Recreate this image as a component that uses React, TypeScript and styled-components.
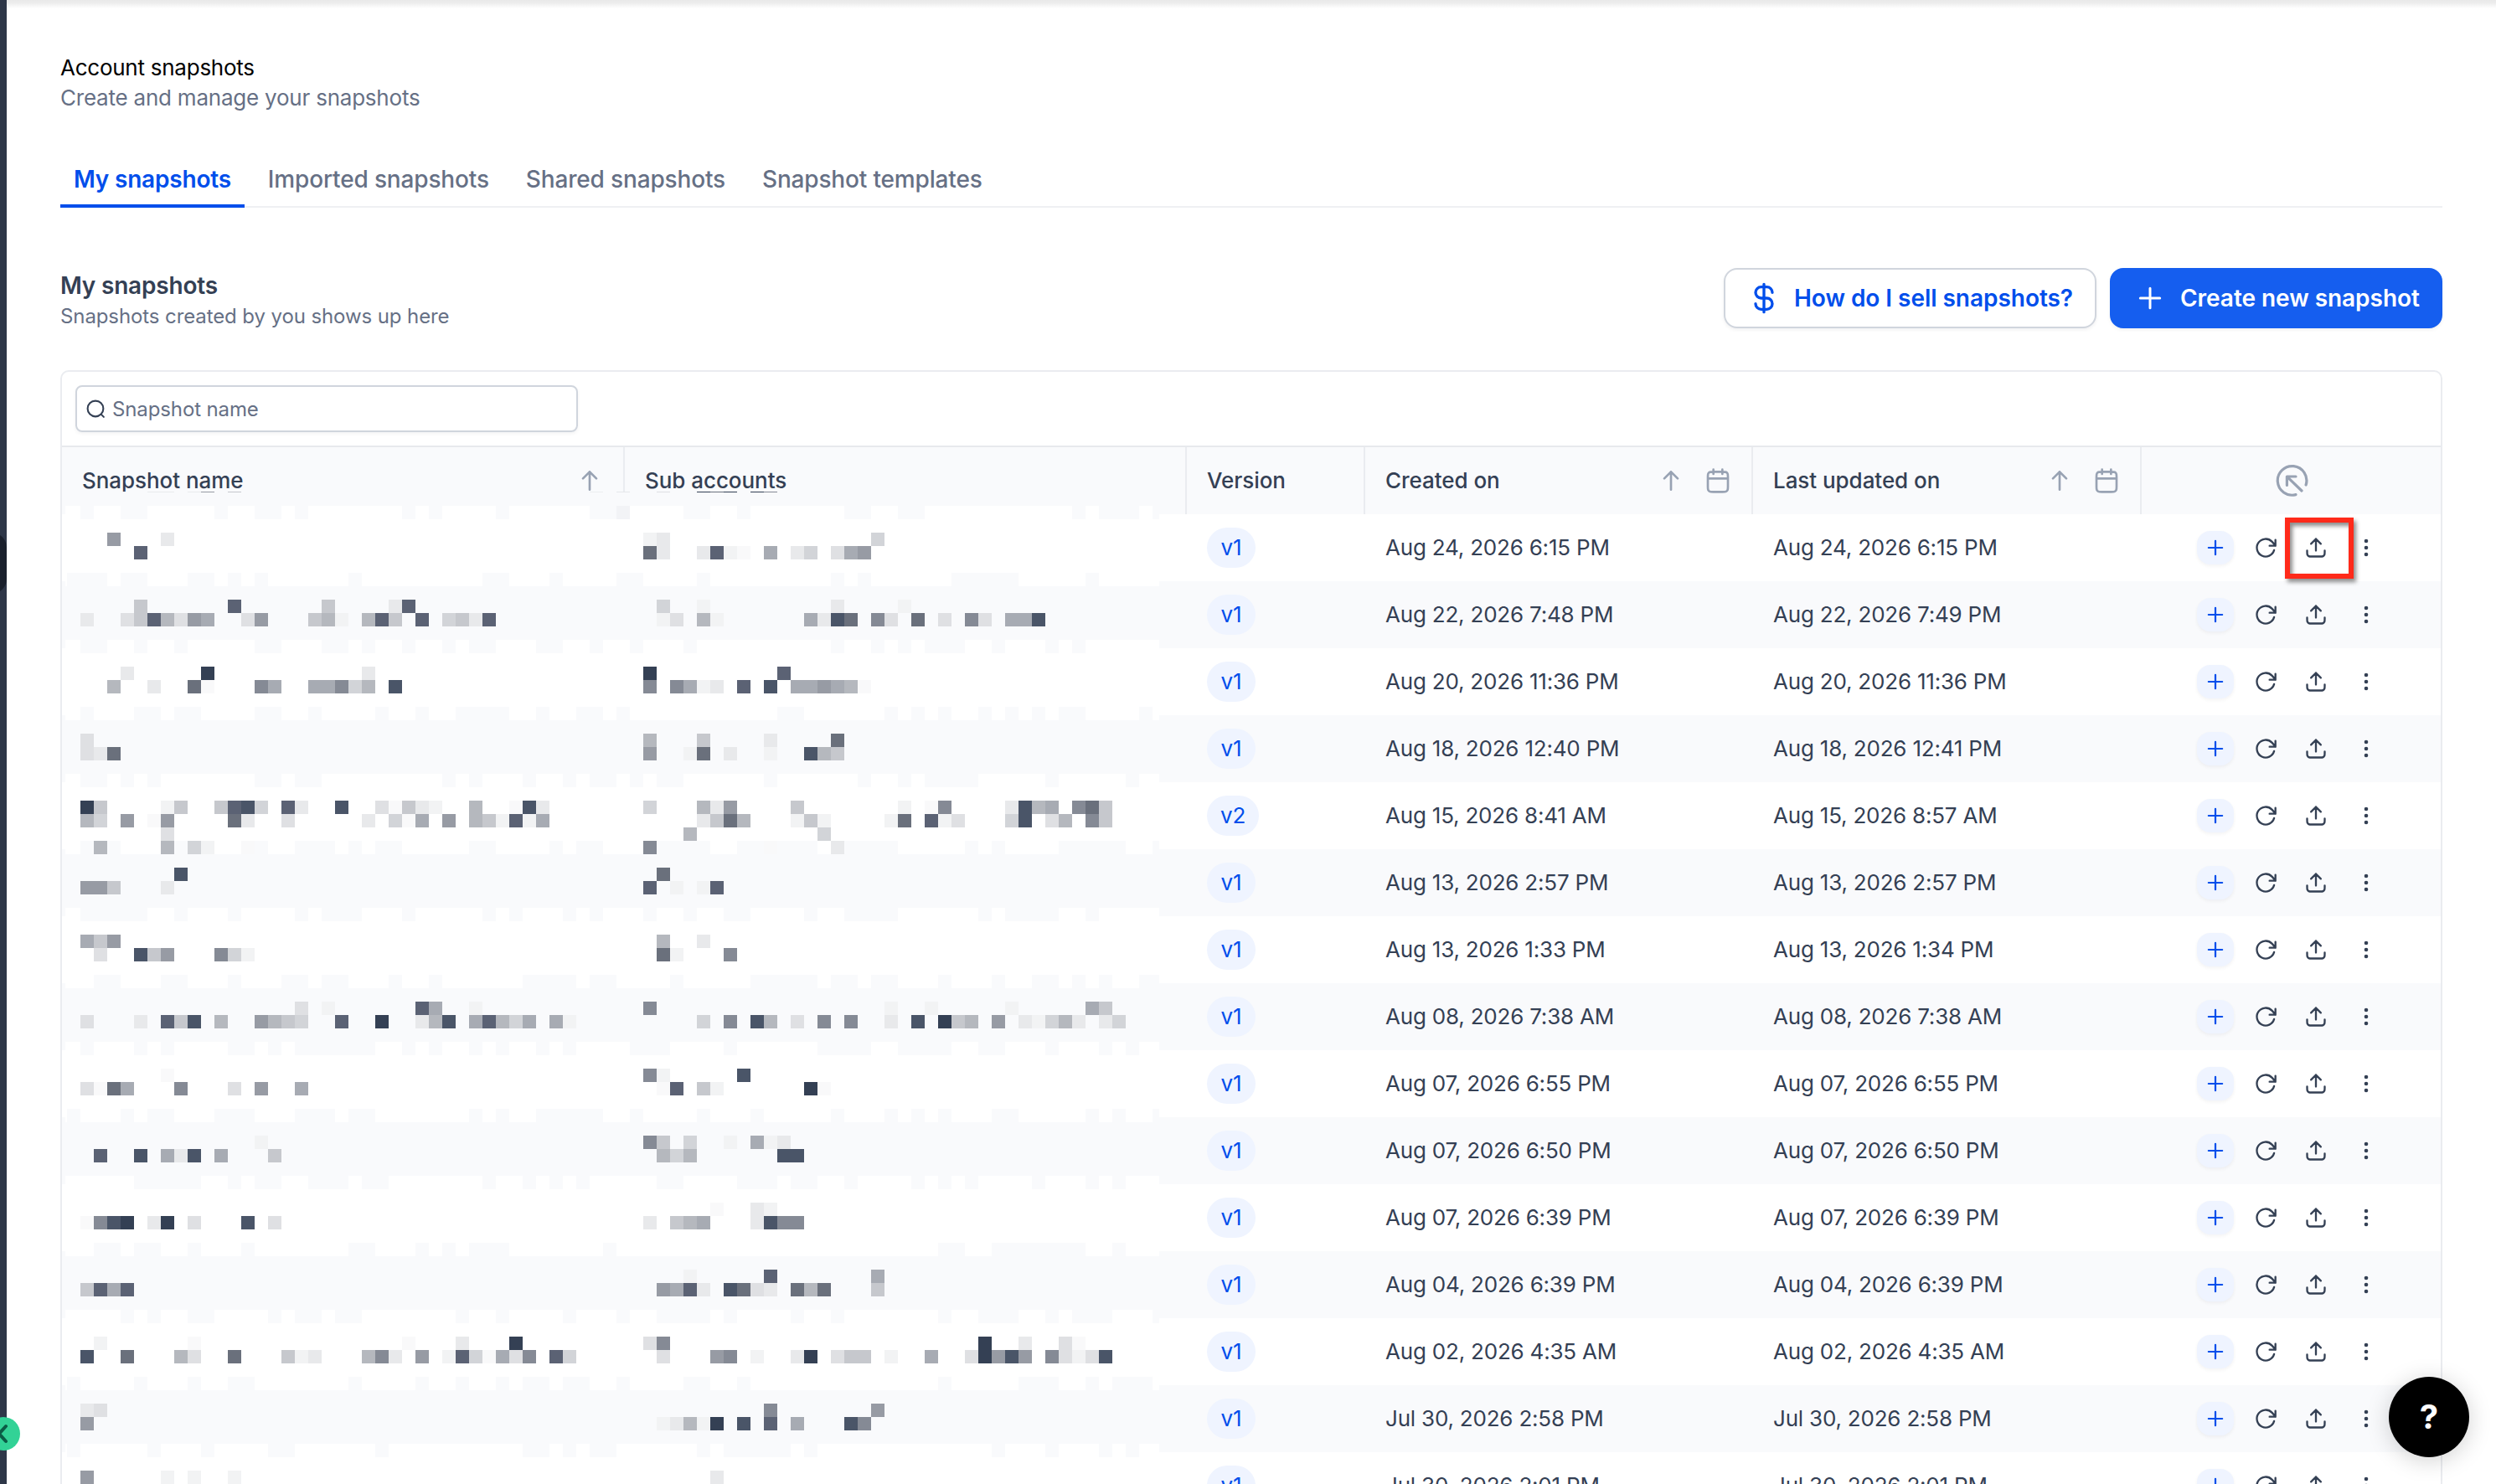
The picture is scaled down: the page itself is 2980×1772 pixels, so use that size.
import React from 'react';
import styled, { createGlobalStyle, css } from 'styled-components';

const Global = createGlobalStyle`
  html, body { margin: 0; padding: 0; background: #fff; }
  *, *::before, *::after { box-sizing: border-box; }
  body { font-family: Inter, "Liberation Sans", sans-serif; -webkit-font-smoothing: antialiased; }
`;

const ROW_H = 80;
const COLUMNS = '672px 671px 213px 463px 464px 1fr';

const Page = styled.div`
  position: relative;
  display: flex;
  width: 2980px;
  height: 1772px;
  overflow: hidden;
  background: #fff;
`;

const Rail = styled.aside`
  position: relative;
  flex: 0 0 8px;
  background: #2e3748;
  overflow: hidden;
`;

const RailHandle = styled.span`
  position: absolute;
  top: 636px;
  right: 0;
  width: 40px;
  height: 73px;
  border-radius: 18px;
  background: #1a202c;
`;

const CollapseButton = styled.button`
  position: absolute;
  left: -16px;
  top: 1692px;
  width: 40px;
  height: 40px;
  padding: 0;
  border: 0;
  border-radius: 50%;
  background: #32d296;
  color: #0b5c46;
  display: grid;
  place-items: center;
`;

const TopShadow = styled.div`
  position: absolute;
  left: 8px;
  right: 0;
  top: 0;
  height: 10px;
  background: linear-gradient(#e9e9e9 0, #ededed 35%, #fff 100%);
`;

const Main = styled.main`
  flex: 1;
  padding: 64px 64px 0;
  min-width: 0;
`;

const PageHead = styled.header`
  display: flex;
  flex-direction: column;
`;

const PageTitle = styled.h1`
  margin: 0;
  font-size: 26px;
  line-height: 34px;
  font-weight: 400;
  letter-spacing: -0.25px;
  color: #000;
`;

const PageLead = styled.p`
  margin: 2px 0 0;
  font-size: 26px;
  line-height: 34px;
  letter-spacing: -0.22px;
  color: #667085;
`;

const Tabs = styled.nav`
  display: flex;
  gap: 12px;
  height: 64px;
  margin-top: 50px;
  box-shadow: inset 0 -2px 0 #eff0f3;
`;

const Tab = styled.a<{ $active?: boolean }>`
  padding: 13px 16px 0;
  height: 64px;
  font-size: 28px;
  line-height: 34px;
  font-weight: 500;
  letter-spacing: -0.16px;
  white-space: nowrap;
  color: #667085;
  ${p => p.$active && css`
    color: #004eeb;
    font-weight: 600;
    letter-spacing: -0.2px;
    border-bottom: 4px solid #004eeb;
  `}
`;

const SectionHead = styled.section`
  display: flex;
  justify-content: space-between;
  align-items: flex-start;
  padding-top: 72px;
  height: 194px;
`;

const SectionTitle = styled.h2`
  margin: 4px 0 0;
  font-size: 28px;
  line-height: 34px;
  font-weight: 600;
  letter-spacing: -0.2px;
  color: #344054;
`;

const SectionLead = styled.p`
  margin: 5px 0 0;
  font-size: 24px;
  line-height: 30px;
  letter-spacing: -0.1px;
  color: #667085;
`;

const Actions = styled.div`
  display: flex;
  gap: 16px;
`;

const Button = styled.button<{ $primary?: boolean }>`
  display: flex;
  align-items: center;
  gap: 16px;
  width: ${p => (p.$primary ? 397 : 445)}px;
  height: 72px;
  padding: 0 0 0 26px;
  border: 2px solid ${p => (p.$primary ? '#155eef' : '#d0d5dd')};
  border-radius: 16px;
  background: ${p => (p.$primary ? '#155eef' : '#fff')};
  color: ${p => (p.$primary ? '#fff' : '#004eeb')};
  box-shadow: 0 2px 4px rgba(16, 24, 40, 0.06);
  font: 600 28px/40px Inter, "Liberation Sans", sans-serif;
  letter-spacing: -0.04px;
  white-space: nowrap;
`;

const Card = styled.section`
  position: relative;
  height: 1500px;
  border: 2px solid #eaecf0;
  border-radius: 10px 10px 0 0;
`;

const Toolbar = styled.div`
  height: 90px;
  padding: 16px;
  border-bottom: 2px solid #e7e9ed;
`;

const SearchField = styled.label`
  display: flex;
  align-items: center;
  gap: 7px;
  width: 600px;
  height: 56px;
  padding-left: 10px;
  border: 2px solid #d0d5dd;
  border-radius: 8px;
  box-shadow: 0 2px 4px rgba(16, 24, 40, 0.05);
  font-size: 24px;
  letter-spacing: -0.12px;
  color: #667085;

  svg { color: #344054; }
`;

const HeadRow = styled.div`
  display: grid;
  grid-template-columns: ${COLUMNS};
  height: ${ROW_H}px;
  background: #f9fafc;
`;

const HeadCell = styled.div<{ $last?: boolean }>`
  display: flex;
  align-items: center;
  justify-content: ${p => (p.$last ? 'center' : 'flex-start')};
  padding: 0 ${p => (p.$last ? 0 : 24)}px 1px;
  border-right: ${p => (p.$last ? 0 : 2)}px solid #eaecf0;
  font-size: 26px;
  font-weight: 500;
  letter-spacing: -0.05px;
  color: ${p => (p.$last ? '#98a2b3' : '#344054')};
  white-space: nowrap;
`;

const HeadIcons = styled.span`
  display: flex;
  align-items: center;
  gap: 24px;
  margin-left: auto;
  color: #98a2b3;
`;

const Row = styled.div<{ $alt: boolean }>`
  display: grid;
  grid-template-columns: ${COLUMNS};
  align-items: center;
  height: ${ROW_H}px;
  background: ${p => (p.$alt ? '#f9fafc' : '#fff')};
`;

const Cell = styled.div`
  padding-left: 24px;
  font-size: 26px;
  line-height: 36px;
  letter-spacing: -0.2px;
  color: #344054;
  white-space: nowrap;
`;

const Badge = styled.span`
  display: inline-flex;
  align-items: center;
  justify-content: center;
  height: 48px;
  min-width: 58px;
  padding: 0 16px;
  border-radius: 24px;
  background: #eff4ff;
  color: #004eeb;
`;

const RowActions = styled.div`
  display: flex;
  align-items: center;
  padding-left: 66px;
  color: #344054;
`;

const AddButton = styled.button`
  width: 44px;
  height: 40px;
  margin-right: 8px;
  padding: 0;
  border: 0;
  border-radius: 16px;
  display: grid;
  place-items: center;
  background: #eff4ff;
  color: #004eeb;
  box-shadow: 0 2px 4px rgba(16, 24, 40, 0.05);
`;

const IconButton = styled.span`
  width: 60px;
  display: grid;
  place-items: center;
`;

const Mosaic = styled.svg`
  position: absolute;
  left: 4px;
  top: 142px;
  pointer-events: none;
`;

const Highlight = styled.div`
  position: absolute;
  left: 2728px;
  top: 618px;
  width: 82px;
  height: 73px;
  border: 6px solid #ff2a1a;
  box-shadow: 3px 4px 5px rgba(0, 0, 0, 0.45), inset 3px 4px 5px rgba(0, 0, 0, 0.45);
`;

const HelpButton = styled.button`
  position: absolute;
  left: 2852px;
  top: 1644px;
  width: 96px;
  height: 96px;
  padding: 0;
  border: 0;
  border-radius: 50%;
  background: #000;
  color: #fff;
  font: 700 40px/96px Inter, "Liberation Sans", sans-serif;
  text-align: center;
  box-shadow: 0 4px 28px rgba(0, 0, 0, 0.18);
`;

type IconProps = { d: string; size?: number; stroke?: number; box?: number };

const Icon = ({ d, size = 28, stroke = 2, box = 24 }: IconProps) => (
  <svg width={size} height={size} viewBox={`0 0 ${box} ${box}`} fill="none" stroke="currentColor"
    strokeWidth={stroke} strokeLinecap="round" strokeLinejoin="round">
    <path d={d} />
  </svg>
);

const PATHS = {
  dollar: 'M6 16a4 4 0 0 0 4 4h4a4 4 0 0 0 0-8h-4a4 4 0 0 1 0-8h4a4 4 0 0 1 4 4M12 2v20',
  plus: 'M12 5v14M5 12h14',
  search: 'M18.6 18.6L21 21M20.5 11.5a9 9 0 1 1-18 0a9 9 0 0 1 18 0z',
  arrowUp: 'M12 20V4m0 0l-6 6m6-6l6 6',
  calendar: 'M21 10H3m13-8v4M8 2v4M7.8 22h8.4c1.68 0 2.52 0 3.162-.327a3 3 0 0 0 1.311-1.311C21 19.72 21 18.88 21 17.2V8.8c0-1.68 0-2.52-.327-3.162a3 3 0 0 0-1.311-1.311C18.72 4 17.88 4 16.2 4H7.8c-1.68 0-2.52 0-3.162.327a3 3 0 0 0-1.311 1.311C3 6.28 3 7.12 3 8.8v8.4c0 1.68 0 2.52.327 3.162a3 3 0 0 0 1.311 1.311C5.28 22 6.12 22 7.8 22z',
  action: 'M37.1 25A17.3 17.3 0 1 0 25 36.6M25 15H14.4V25.4M15 15.6L32 32',
  refresh: 'M22 10s-2.005-2.732-3.634-4.362A9 9 0 1 0 20.648 14.5M22 10V4m0 6h-6',
  upload: 'M21 15v1.2c0 1.68 0 2.52-.327 3.162a3 3 0 0 1-1.311 1.311C18.72 21 17.88 21 16.2 21H7.8c-1.68 0-2.52 0-3.162-.327a3 3 0 0 1-1.311-1.311C3 18.72 3 17.88 3 16.2V15m14-7l-5-5m0 0L7 8m5-5v12',
};

const DotsIcon = () => (
  <svg width="28" height="28" viewBox="0 0 28 28" fill="currentColor">
    <circle cx="14" cy="6" r="2.3" />
    <circle cx="14" cy="14" r="2.3" />
    <circle cx="14" cy="22" r="2.3" />
  </svg>
);

const SNAPSHOTS: [string, string, string][] = [
  ['v1', 'Aug 24, 2026 6:15 PM', 'Aug 24, 2026 6:15 PM'],
  ['v1', 'Aug 22, 2026 7:48 PM', 'Aug 22, 2026 7:49 PM'],
  ['v1', 'Aug 20, 2026 11:36 PM', 'Aug 20, 2026 11:36 PM'],
  ['v1', 'Aug 18, 2026 12:40 PM', 'Aug 18, 2026 12:41 PM'],
  ['v2', 'Aug 15, 2026 8:41 AM', 'Aug 15, 2026 8:57 AM'],
  ['v1', 'Aug 13, 2026 2:57 PM', 'Aug 13, 2026 2:57 PM'],
  ['v1', 'Aug 13, 2026 1:33 PM', 'Aug 13, 2026 1:34 PM'],
  ['v1', 'Aug 08, 2026 7:38 AM', 'Aug 08, 2026 7:38 AM'],
  ['v1', 'Aug 07, 2026 6:55 PM', 'Aug 07, 2026 6:55 PM'],
  ['v1', 'Aug 07, 2026 6:50 PM', 'Aug 07, 2026 6:50 PM'],
  ['v1', 'Aug 07, 2026 6:39 PM', 'Aug 07, 2026 6:39 PM'],
  ['v1', 'Aug 04, 2026 6:39 PM', 'Aug 04, 2026 6:39 PM'],
  ['v1', 'Aug 02, 2026 4:35 AM', 'Aug 02, 2026 4:35 AM'],
  ['v1', 'Jul 30, 2026 2:58 PM', 'Jul 30, 2026 2:58 PM'],
  ['v1', 'Jul 30, 2026 2:01 PM', 'Jul 30, 2026 2:01 PM'],
];

/* Redacted names. Each entry is "column:shades", one hex digit per 16px block. */
const SHADES: Record<string, string> = {
  '0': '#344054', '1': '#4a5568', '2': '#5b6274', '3': '#6a707c', '4': '#858a95',
  '5': '#979ba4', '6': '#a7abb3', '7': '#b5b8be', '8': '#c6c8cd', '9': '#d2d4d8',
  a: '#dfe0e3', b: '#e8e9eb', c: '#f2f3f4', d: '#f9f9fa',
};

/* [block line within the row, name column, sub-account column] */
const REDACTED: [number, string, string][][] = [
  [[2, '2:5 6:b', '0:cb 17:9'], [3, '4:2', '0:3b 4:b2cd 9:6 11:b9 14:a65']],
  [[2, '4:8 11:2 18:8 23:b2', '1:9 4:c 14:b 19:c'], [3, '0:b 3:a827a56 12:a5 17:87c 21:728 25:2 27:98b2', '1:ca 4:7c 12:6b13 17:4a 20:3 22:a 24:4a 27:661']],
  [[2, '3:b 9:0 21:b', '0:0 10:2'], [3, '2:7 5:b 8:3d 13:46 17:66497 23:1', '0:4 2:46cb 7:2 9:1 11:66567d']],
  [[2, '0:a', '0:7 4:8 9:b 14:3'], [3, '0:ab3', '0:5 3:c3 6:b 9:c 12:178']],
  [[2, '0:08 6:c8 10:8219 15:2b 19:1 22:ad8bc 29:7 32:d1b', '0:9 4:7b5 11:8 19:c 21:d4 27:b176 32:438'],
    [3, '0:79 3:5 5:d5 11:3b 15:a 21:b 23:9d6 27:5 29:78c2c6', '4:b837 11:c8c 18:c3 21:2ca 27:91 30:a7 33:48'],
    [4, '6:a', '3:7 13:9'], [5, '1:7 6:7 8:9c 12:d', '0:4 9:d 14:b']],
  [[2, '7:1', '1:3'], [3, '0:558 6:b', '0:2 2:c 4:c2']],
  [[2, '0:685', '1:7 4:b'], [3, '1:a 4:185 10:49c', '1:3c 6:4']],
  [[2, '16:a 18:c 25:26 29:c', '0:4 18:c 21:c 27:c 33:68'], [3, '0:a 4:b 6:281 10:7 13:5789 19:2 22:0 25:b71 29:62796 35:6c', '4:9 6:4 8:17 11:a 13:4 15:4 18:b 20:1 22:087 26:5 28:bc97b 34:b9']],
  [[2, '6:d', '0:4c 7:1'], [3, '0:ad36 7:4 11:a 13:5 16:6', '1:d2 4:8c 12:0d']],
  [[2, '13:c', '0:48 3:9 6:c 8:6cb'], [3, '1:2 4:1 6:6b1 10:6 14:8', '1:797 10:11']],
  [[2, '', '5:d 8:bc'], [3, '0:d410 5:b0 8:a 12:1 14:a', '0:b 2:876 8:b144']],
  [[2, '', '3:c 9:2 17:6'], [3, '0:8262', '1:562b 6:13ab 11:373 17:8']],
  [[2, '1:c 8:d 24:d 28:b 32:0', '0:a4 25:0 28:b 31:ad'], [3, '0:1 3:3 7:7a 11:3 15:8cb 21:74b 25:5 27:c29d6a4 35:29', '1:a 5:54 8:c 11:b0 14:a88 18:c 21:6 24:a0515 30:4aca1']],
  [[2, '0:ba', '9:4 17:5'], [3, '0:5', '1:cb7c0 7:1 9:2 11:6 15:14']],
  [[2, '0:5 6:c 8:c 11:c', '5:b']],
];

/* Tinted runs in the ragged band where two striped rows meet: "column:length". */
const BANDS: [string, string][] = [
  ['0 3:2 10 13:2 16 24 26 31 38:2', '3:2 7 15:2 19:2 32 34:3 38'],
  ['-1:3 3:2 8:2 11 13 20 30:2 35', '-2:2 4 14 16 23:4 27 33'],
  ['0:2 4 7 13:2 18:2 21 24 27 29:2 34:2 38', '-4 -1 3 14 17 19 21:3 26 30 32'],
  ['0 4:2 7:2 13:2 17 22 25 28:4 34 37:2', '-4 -2 10:2 18 20 22 25 27 29 31:2 37'],
  ['0:2 3 5 13:2 16:2 27 29 33 36 38:2', '-4:2 -1 1:2 9 16 19 21:4 30 36'],
  ['0 2 7 13 16:3 20 22:2 29:2 35 37:2', '-4 1:4 7:6 15:4 24 26 31:5 38'],
  ['0:5 7 11 16 18:3 24 30 32 36 38', '-4 0 3 6:2 12 15:3 18 25 27:4 33'],
  ['1:2 6:2 11 15:2 18:2 23 26 33:4 38:2', '-4:2 2 8:5 14:2 17:2 22 26 29:2 32 34 37:2'],
  ['0 4 6 11:2 14 16:6 24 26 29 31 34 36', '-1:3 6 13:4 19:4 25:2 30 34 36'],
  ['-1 3 5:2 10:3 16:3 20:2 29 31 34:5', '-4 -1 4 8 14 18 20 22 26:2 33 35 38'],
  ['4:5 11 13:2 17:3 21:2 30 33 35 37', '1:2 7:3 11:2 15 20 22 24 29 33 35'],
  ['1:2 4:2 8 12 20:2 25 27 29:3 39', '-3 22:2 26:7 35'],
  ['3 5 8:2 14 16:2 19:2 28 31 36 40', '-2 1:4 6 11 14 22 25:3 30 32:3 38'],
  ['-1 4 8 11:2 20 25 28 31 33:2 36:2', '-2 3:2 7 22 28:3 33 35:3'],
  ['-1 5 9 14:2 22 33:2 36', '-4:2 4 6:5 12 26 30 34 36'],
];

/* Slivers of blurred header text along the top edge: [x, width, colour]. */
const HEADER_SLIVERS: [number, number, string][] = [
  [176, 32, '#e9ebed'], [224, 16, '#e9ebed'], [240, 16, '#979ba4'], [272, 16, '#c6c8cd'],
  [704, 16, '#eceef0'], [736, 16, '#e6e8eb'], [784, 16, '#dfe0e3'], [832, 16, '#344054'],
  [848, 16, '#6c727e'], [864, 16, '#344054'], [896, 16, '#344054'], [912, 16, '#858a95'],
];

const BLOCK = 16;
const TINT = '#f9fafc';

function Blocks({ runs, x, y }: { runs: string; x: number; y: number }) {
  return (
    <>
      {runs.split(' ').filter(Boolean).map(run => {
        const [start, shades] = run.split(':');
        return shades.split('').map((s, i) => (
          <rect key={run + i} x={x + (Number(start) + i) * BLOCK} y={y} width={BLOCK} height={BLOCK} fill={SHADES[s]} />
        ));
      })}
    </>
  );
}

function BandRuns({ runs, x, y }: { runs: string; x: number; y: number }) {
  return (
    <>
      {runs.split(' ').map(run => {
        const [start, len] = run.split(':');
        return <rect key={run} x={x + Number(start) * BLOCK} y={y} width={BLOCK * Number(len || 1)} height={BLOCK} fill={TINT} />;
      })}
    </>
  );
}

function RedactedNames() {
  return (
    <Mosaic width="1306" height="1186" viewBox="78 586 1306 1186" shapeRendering="crispEdges">
      <rect x="78" y="587" width="1306" height="17" fill={TINT} />
      {HEADER_SLIVERS.map(([x, w, fill]) => (
        <rect key={x} x={x} y="587" width={w} height="1" fill={fill} />
      ))}
      {REDACTED.map((_, i) => {
        const top = 604 + i * ROW_H;
        return (
          <g key={i}>
            <rect x="78" y={top} width="1306" height={BLOCK} fill="#fff" />
            <rect x="78" y={top + BLOCK} width="1306" height={BLOCK * 4} fill={i % 2 ? TINT : '#fff'} />
            <BandRuns runs={BANDS[i][0]} x={96} y={top} />
            <BandRuns runs={BANDS[i][1]} x={768} y={top} />
          </g>
        );
      })}
      <rect x="736" y="604" width="16" height="16" fill="#f2f3f6" />
      {REDACTED.map((lines, i) => lines.map(([line, name, sub]) => (
        <g key={`${i}-${line}`}>
          <Blocks runs={name} x={96} y={604 + i * ROW_H + line * BLOCK} />
          <Blocks runs={sub} x={768} y={604 + i * ROW_H + line * BLOCK} />
        </g>
      )))}
    </Mosaic>
  );
}

export default function App() {
  return (
    <>
      <Global />
      <Page>
        <Rail><RailHandle /></Rail>
        <Main>
          <PageHead>
            <PageTitle>Account snapshots</PageTitle>
            <PageLead>Create and manage your snapshots</PageLead>
          </PageHead>
          <Tabs>
            <Tab $active>My snapshots</Tab>
            <Tab>Imported snapshots</Tab>
            <Tab>Shared snapshots</Tab>
            <Tab>Snapshot templates</Tab>
          </Tabs>
          <SectionHead>
            <div>
              <SectionTitle>My snapshots</SectionTitle>
              <SectionLead>Snapshots created by you shows up here</SectionLead>
            </div>
            <Actions>
              <Button><Icon d={PATHS.dollar} size={40} />How do I sell snapshots?</Button>
              <Button $primary><Icon d={PATHS.plus} size={40} stroke={1.8} />Create new snapshot</Button>
            </Actions>
          </SectionHead>
          <Card>
            <Toolbar>
              <SearchField>
                <Icon d={PATHS.search} size={25} />Snapshot name
              </SearchField>
            </Toolbar>
            <HeadRow>
              <HeadCell>Snapshot name<HeadIcons><Icon d={PATHS.arrowUp} size={32} /></HeadIcons></HeadCell>
              <HeadCell>Sub accounts</HeadCell>
              <HeadCell>Version</HeadCell>
              <HeadCell>Created on<HeadIcons><Icon d={PATHS.arrowUp} size={32} /><Icon d={PATHS.calendar} size={32} /></HeadIcons></HeadCell>
              <HeadCell>Last updated on<HeadIcons><Icon d={PATHS.arrowUp} size={32} /><Icon d={PATHS.calendar} size={32} /></HeadIcons></HeadCell>
              <HeadCell $last><Icon d={PATHS.action} size={40} box={40} stroke={3.2} /></HeadCell>
            </HeadRow>
            {SNAPSHOTS.map(([version, created, updated], i) => (
              <Row key={i} $alt={i % 2 === 1}>
                <Cell />
                <Cell />
                <Cell><Badge>{version}</Badge></Cell>
                <Cell>{created}</Cell>
                <Cell>{updated}</Cell>
                <RowActions>
                  <AddButton><Icon d={PATHS.plus} stroke={1.9} /></AddButton>
                  <IconButton><Icon d={PATHS.refresh} /></IconButton>
                  <IconButton><Icon d={PATHS.upload} /></IconButton>
                  <IconButton><DotsIcon /></IconButton>
                </RowActions>
              </Row>
            ))}
            <RedactedNames />
          </Card>
        </Main>
        <TopShadow />
        <Highlight />
        <CollapseButton>
          <svg width="24" height="24" viewBox="0 0 24 24" fill="none" stroke="currentColor" strokeWidth="4" strokeLinecap="round" strokeLinejoin="round">
            <path d="M15 3l-8 9 8 9" />
          </svg>
        </CollapseButton>
        <HelpButton>?</HelpButton>
      </Page>
    </>
  );
}
